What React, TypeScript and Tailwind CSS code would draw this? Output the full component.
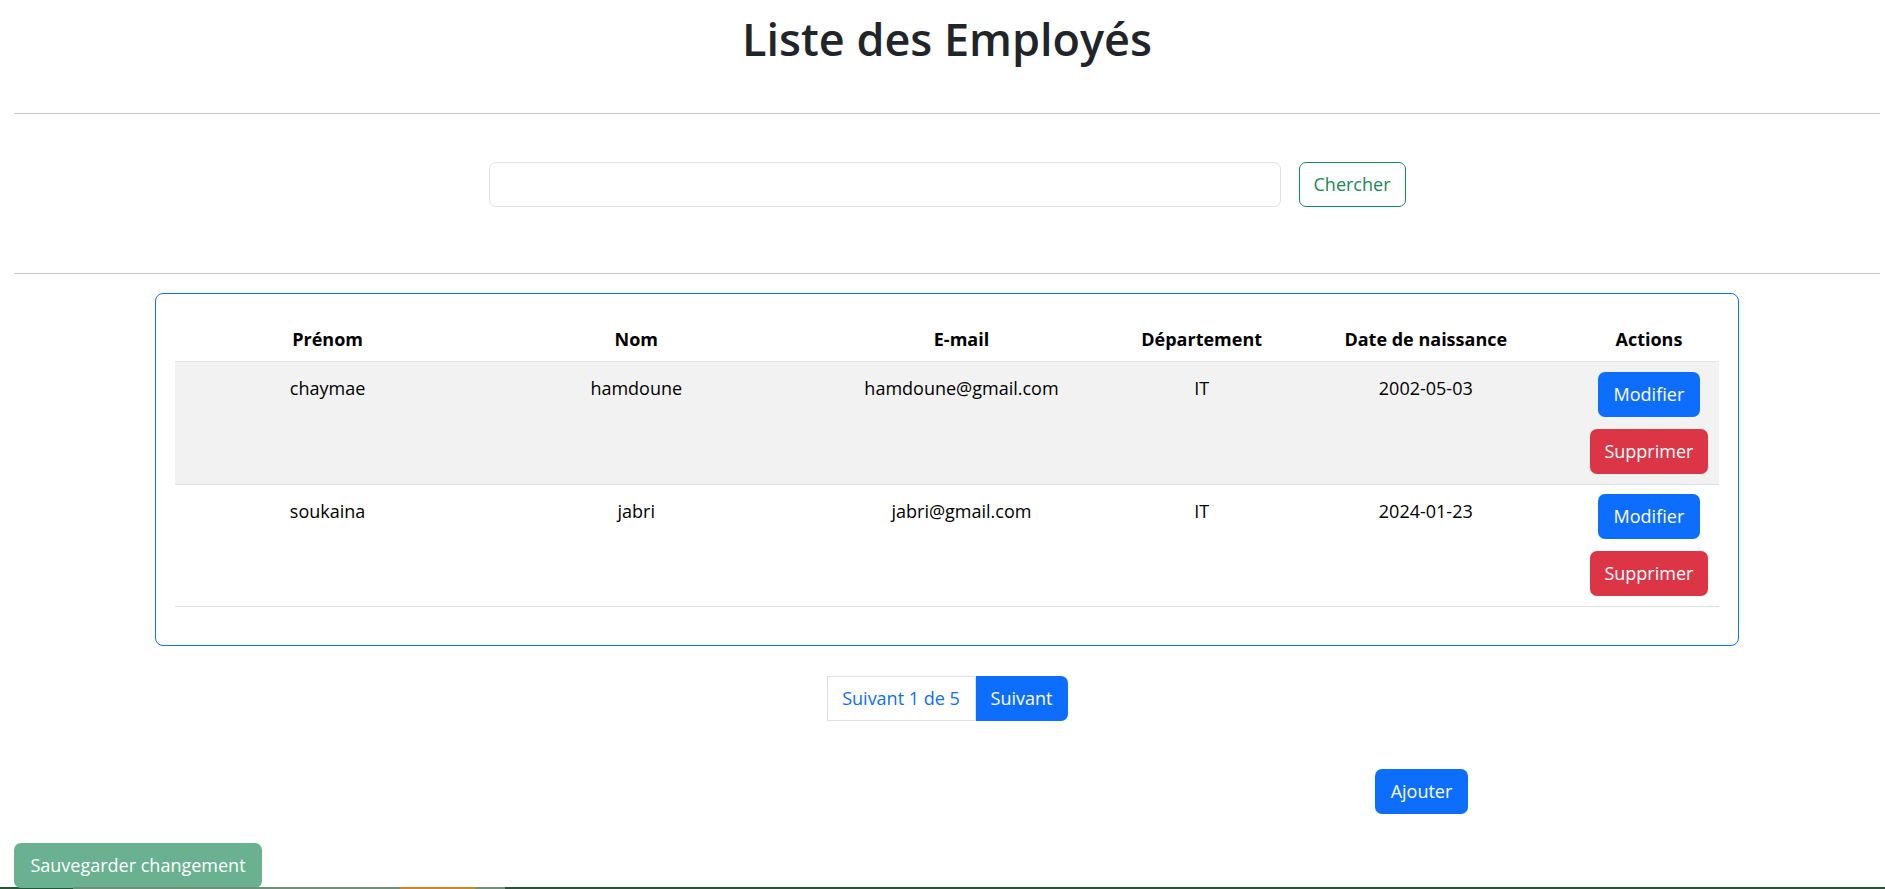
import React from 'react'

const employees = [
  { prenom: 'chaymae', nom: 'hamdoune', email: 'hamdoune@gmail.com', dept: 'IT', naissance: '2002-05-03' },
  { prenom: 'soukaina', nom: 'jabri', email: 'jabri@gmail.com', dept: 'IT', naissance: '2024-01-23' },
]

export default function App() {
  return (
    <div className="min-h-screen bg-white text-[#212529] font-['Open_Sans','Noto_Sans',sans-serif] text-[18px] leading-[28.8px]">
      <div className="ml-[14px] mr-[5px]">
        {/* Titre */}
        <h1 className="pt-[10px] text-center text-[45px] leading-[57.6px] font-semibold">Liste des Employés</h1>
        <hr className="mt-[45px] border-t border-[#c8c8c8]" />

        {/* Recherche */}
        <div className="mt-[48px] flex justify-center gap-[18px]">
          <input className="w-[792px] h-[45px] rounded-[7px] border border-[#dee2e6] px-[14px] outline-none" />
          <button className="h-[45px] w-[107px] rounded-[7px] border border-[#198754] text-[#198754]">Chercher</button>
        </div>
        <hr className="mt-[66px] border-t border-[#c8c8c8]" />

        {/* Tableau */}
        <div className="mx-auto mt-[19px] w-[1584px] rounded-[8px] border border-[#0d6efd] px-[19px] pt-[20px] pb-[19px]">
          <table className="w-full table-fixed border-collapse mb-[19px] text-black">
            <colgroup>
              <col className="w-[305px]" />
              <col className="w-[312px]" />
              <col className="w-[338px]" />
              <col className="w-[142px]" />
              <col className="w-[306px]" />
              <col className="w-[140px]" />
            </colgroup>
            <thead>
              <tr className="border-b border-[#dee2e6]">
                {['Prénom', 'Nom', 'E-mail', 'Département', 'Date de naissance', 'Actions'].map(h => (
                  <th key={h} className="pt-[11px] pb-[8px] font-bold text-center">{h}</th>
                ))}
              </tr>
            </thead>
            <tbody>
              {employees.map((e, i) => (
                <tr key={e.email} className={`border-b border-[#dee2e6] ${i % 2 === 0 ? 'bg-[#f2f2f2]' : 'bg-white'}`}>
                  <td className="pt-[12px] pb-[9.6px] text-center align-top">{e.prenom}</td>
                  <td className="pt-[12px] pb-[9.6px] text-center align-top">{e.nom}</td>
                  <td className="pt-[12px] pb-[9.6px] text-center align-top">{e.email}</td>
                  <td className="pt-[12px] pb-[9.6px] text-center align-top">{e.dept}</td>
                  <td className="pt-[12px] pb-[9.6px] text-center align-top">{e.naissance}</td>
                  <td className="py-[9.6px] align-top">
                    <div className="flex flex-col items-center gap-[12px]">
                      <button className="h-[45px] w-[102px] rounded-[7px] bg-[#0d6efd] text-white">Modifier</button>
                      <button className="h-[45px] w-[118px] rounded-[7px] bg-[#dc3545] text-white">Supprimer</button>
                    </div>
                  </td>
                </tr>
              ))}
            </tbody>
          </table>
        </div>

        {/* Pagination */}
        <div className="mt-[30px] flex justify-center">
          <span className="h-[45px] w-[149px] flex items-center justify-center border border-[#dee2e6] text-[#0d6efd]">Suivant 1 de 5</span>
          <button className="h-[45px] w-[92px] rounded-r-[7px] bg-[#0d6efd] text-white">Suivant</button>
        </div>

        <div className="mt-[48px] flex">
          <button className="ml-[1361px] h-[45px] w-[93px] rounded-[7px] bg-[#0d6efd] text-white">Ajouter</button>
        </div>

        <div className="mt-[29px]">
          <button className="h-[45px] w-[248px] rounded-[7px] bg-[#69b190] text-white">Sauvegarder changement</button>
        </div>
      </div>

      {/* bas de page */}
      <div className="-mt-[1px] flex h-[120px] bg-[#27553b]">
        <div className="w-[73px]" />
        <div className="w-[327px] bg-[#6f8f78]" />
        <div className="w-[75px] bg-[#c8892e]" />
        <div className="w-[30px] bg-[#6f8f78]" />
      </div>
    </div>
  )
}
